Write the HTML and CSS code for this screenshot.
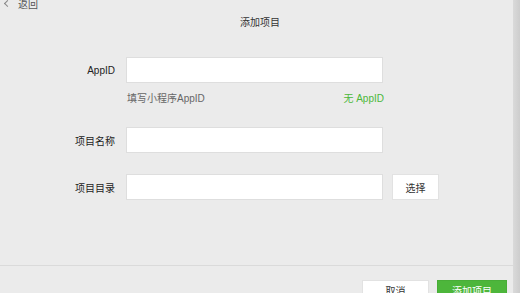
FILE: index.html
```html
<!DOCTYPE html>
<html lang="zh-CN">
<head>
  <meta charset="UTF-8" />
  <title>添加项目</title>
  <link rel="stylesheet" href="styles.css">
</head>
<body>
  <div class="page">
    <div class="main">
      <a class="back" href="#"><span class="chevron"></span>返回</a>
      <h2 class="title">添加项目</h2>

      <div class="form">
        <div class="field">
          <label for="appid">AppID</label>
          <input type="text" id="appid" />
        </div>
        <div class="hint">
          <span>填写小程序AppID</span>
          <a href="#" class="no-appid">无 AppID</a>
        </div>

        <div class="field">
          <label for="name">项目名称</label>
          <input type="text" id="name" />
        </div>

        <div class="field">
          <label for="dir">项目目录</label>
          <input type="text" id="dir" />
          <button class="btn btn-select">选择</button>
        </div>
      </div>

      <div class="footer">
        <button class="btn btn-cancel">取消</button>
        <button class="btn btn-primary">添加项目</button>
      </div>
    </div>
    <div class="edge"></div>
  </div>
</body>
</html>
```

FILE: styles.css
```css
body {
  margin: 0;
  font-family: "Liberation Sans", "Noto Sans CJK SC", sans-serif;
  font-size: 10px;
  color: #333;
  background-color: #ebebeb;
}
.page {
  display: flex;
  height: 293px;
  overflow: hidden;
}
.main {
  flex: 1;
  display: flex;
  flex-direction: column;
}
.edge {
  width: 7px;
  background: linear-gradient(to right, #dadada, #cdcdcd);
}
.back {
  display: flex;
  align-items: center;
  gap: 8px;
  height: 14px;
  margin-top: -4px;
  padding-left: 5px;
  color: #555;
  text-decoration: none;
}
.chevron {
  width: 4px;
  height: 4px;
  border-left: 1px solid #888;
  border-bottom: 1px solid #888;
  transform: rotate(45deg);
}
.title {
  margin: 5px 0 0;
  font-size: 10px;
  font-weight: normal;
  line-height: 16px;
  text-align: center;
  color: #333;
  padding-left: 7px;
}
.form {
  margin-top: 26px;
}
.field {
  display: flex;
  align-items: center;
  gap: 9px;
  margin-bottom: 21px;
}
.field label {
  width: 116px;
  padding-right: 1px;
  text-align: right;
  color: #222;
  box-sizing: border-box;
}
.field input {
  width: 257px;
  height: 26px;
  box-sizing: border-box;
  margin-left: 1px;
  border: 1px solid #dedede;
  background-color: #fff;
}
.hint {
  display: flex;
  justify-content: space-between;
  width: 257px;
  margin: -13px 0 20px 127px;
  line-height: 16px;
  color: #666;
}
.no-appid {
  color: #4cb83a;
  text-decoration: none;
}
.btn {
  height: 26px;
  padding: 0 12px;
  font-family: inherit;
  font-size: 10px;
  color: #333;
  background-color: #fff;
  border: 1px solid #e2e2e2;
}
.btn-select {
  width: 47px;
  padding: 0;
}
.footer {
  margin-top: auto;
  height: 13px;
  padding: 14px 6px 0 0;
  border-top: 1px solid #dadada;
  display: flex;
  justify-content: flex-end;
  align-items: flex-start;
  gap: 8px;
}
.footer .btn {
  flex: none;
  height: 20px;
  padding: 0;
}
.btn-cancel {
  width: 67px;
}
.btn-primary {
  width: 70px;
  color: #fff;
  background-color: #4db63b;
  border-color: #48ad37;
}
```
